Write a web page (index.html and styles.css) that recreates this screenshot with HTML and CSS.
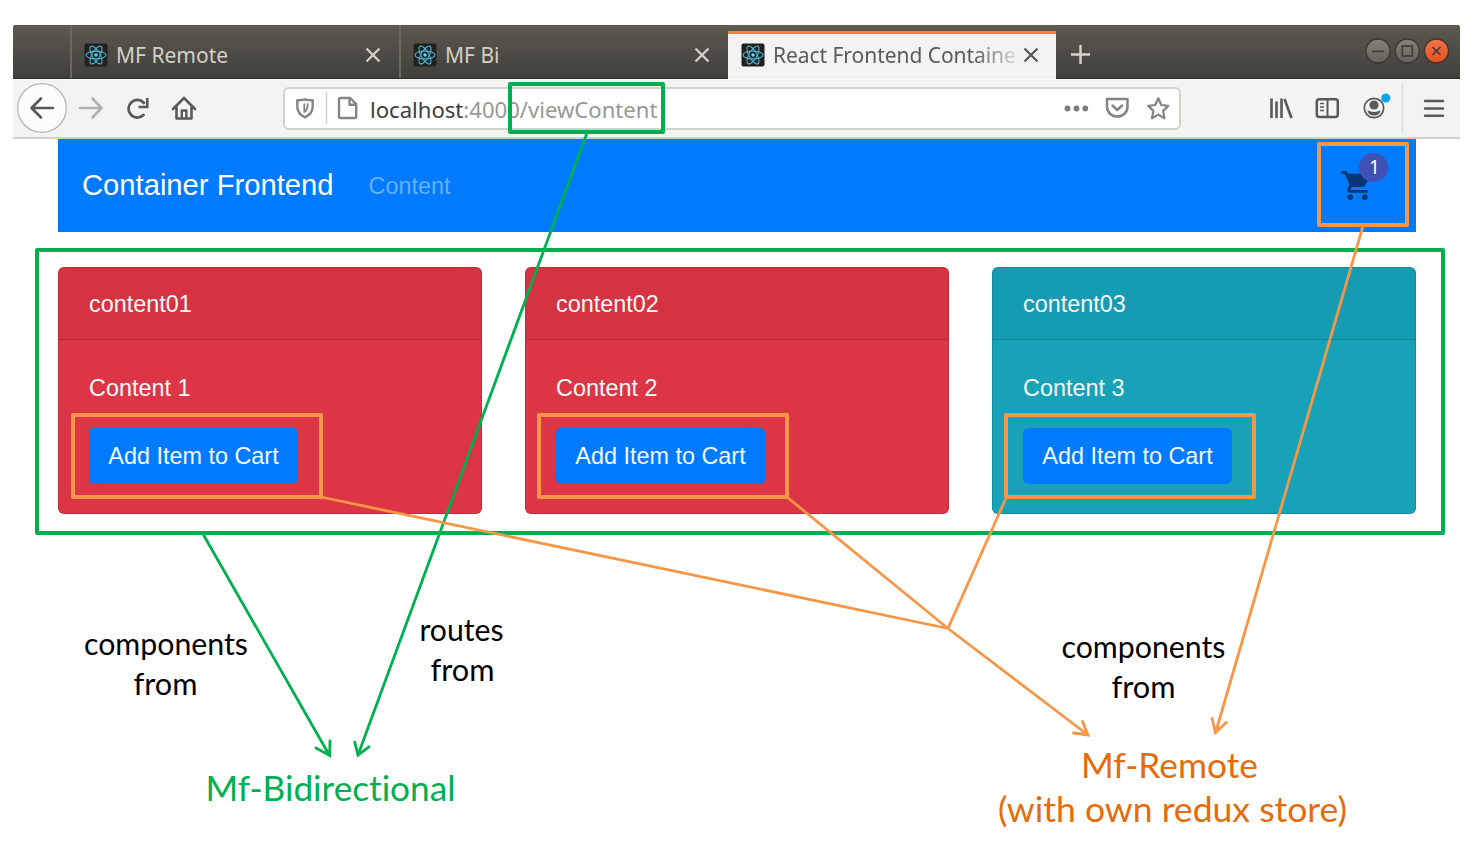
FILE: index.html
```html
<!DOCTYPE html>
<html lang="en">
<head>
<meta charset="utf-8">
<title>React Frontend Container</title>
<link rel="stylesheet" href="styles.css">
</head>
<body>
<svg class="defs" width="0" height="0">
  <symbol id="react" viewBox="0 0 24 24">
    <rect x=".5" y=".5" width="23" height="23" rx="2" fill="#20201f"/>
    <g fill="none" stroke="#4db4d0" stroke-width="1.100">
      <ellipse cx="12" cy="12" rx="10" ry="3.900"/>
      <ellipse cx="12" cy="12" rx="10" ry="3.900" transform="rotate(60 12 12)"/>
      <ellipse cx="12" cy="12" rx="10" ry="3.900" transform="rotate(120 12 12)"/>
    </g>
    <circle cx="12" cy="12" r="1.700" fill="#61dafb"/>
  </symbol>
  <symbol id="close" viewBox="0 0 16 16"><path d="M1.500 1.500l13 13M14.500 1.500l-13 13" fill="none" stroke="currentColor" stroke-width="2.300"/></symbol>
</svg>
<div class="browser">
  <div class="tabbar">
    <div class="tab-gap"></div>
    <div class="tab"><svg class="favicon"><use href="#react"/></svg><span class="tab-title">MF Remote</span><svg class="tab-close"><use href="#close"/></svg></div>
    <div class="tab"><svg class="favicon"><use href="#react"/></svg><span class="tab-title">MF Bi</span><svg class="tab-close"><use href="#close"/></svg></div>
    <div class="tab active"><svg class="favicon"><use href="#react"/></svg><span class="tab-title">React Frontend Containe</span><svg class="tab-close"><use href="#close"/></svg></div>
    <svg class="newtab" viewBox="0 0 22 22"><path d="M11 1v20M1 11h20" stroke="#d6d4cb" stroke-width="2.600"/></svg>
    <svg class="controls" width="88" height="30" viewBox="0 0 88 30">
      <defs><linearGradient id="gray" x2="0" y2="1"><stop offset="0" stop-color="#84827b"/><stop offset="1" stop-color="#64625b"/></linearGradient>
      <linearGradient id="red" x2="0" y2="1"><stop offset="0" stop-color="#f3734a"/><stop offset="1" stop-color="#e4501f"/></linearGradient></defs>
      <g stroke="#383732" stroke-width="1.300"><circle cx="15" cy="15" r="12" fill="url(#gray)"/><circle cx="44.300" cy="15" r="12" fill="url(#gray)"/><circle cx="73.500" cy="15" r="12" fill="url(#red)"/></g>
      <g fill="none" stroke="#3b3a35" stroke-width="1.600"><path d="M9 15.500h12"/><rect x="39.300" y="10" width="10" height="10"/><path d="M69.500 11l8 8M77.500 11l-8 8"/></g>
    </svg>
  </div>
  <div class="toolbar">
    <svg class="nav-icons" width="200" height="59" viewBox="13 79 200 59" fill="none" stroke-width="2.600" stroke-linecap="round" stroke-linejoin="round">
      <circle cx="42" cy="108" r="24.300" fill="#fcfcfc" stroke="#b9b7b4" stroke-width="1.300"/>
      <path d="M53 108H32M41 98.500l-9.500 9.500 9.500 9.500" stroke="#5a5958"/>
      <path d="M80 108h21M92.500 98.500l9 9.500-9 9.500" stroke="#b2b1b0"/>
      <path d="M143.500 115a8.800 8.800 0 1 1 .5-12" stroke="#5a5958" stroke-width="2.800"/><path d="M147.300 98v9h-8.800" stroke="#5a5958" stroke-linejoin="miter" stroke-linecap="butt"/>
      <g stroke="#5a5958"><path d="M173 109l11-11 11 11M176.500 107v11.500h15V107"/><path d="M181.800 118v-7.500h4.600v7.500" stroke-width="2.400"/></g>
    </svg>
    <div class="urlbar">
      <svg width="84" height="42" viewBox="285 88 84 42" fill="none" stroke="#858483" stroke-width="2.400" stroke-linejoin="round">
        <path d="M297.300 100.300c3 0 5-.3 7.700-1 2.700.7 4.700 1 7.700 1v6c0 5-3 9-7.700 11-4.700-2-7.700-6-7.700-11z"/><path d="M304.300 103.500v8.500c2.500-1.500 3.500-3.500 3.500-8.500" stroke-width="1.800"/>
        <path d="M326.500 92v32" stroke="#d0cfcd" stroke-width="1.500"/>
        <path d="M339 99.200q0-1.200 1.200-1.200h10l6 6.200v12.500q0 1.300-1.200 1.300h-14.800q-1.200 0-1.200-1.300zM349.500 98v6.800h6.700"/>
      </svg>
      <div class="address"><b>localhost</b>:4000/viewContent</div>
      <svg class="url-actions" width="120" height="42" viewBox="1060 88 120 42" fill="none" stroke="#858483" stroke-width="2.500" stroke-linejoin="round" stroke-linecap="round">
        <g fill="#7f7e7d" stroke="none"><circle cx="1068.500" cy="108.500" r="2.900"/><circle cx="1077.500" cy="108.500" r="2.900"/><circle cx="1086.300" cy="108.500" r="2.900"/></g>
        <path d="M1108 99h20.500v7.500c0 6-4.500 10-10.200 10s-10.300-4-10.300-10zM1113.500 105.500l4.800 4.500 4.800-4.500"/>
        <path d="M1159.300 98.300l3 6.700 7 .9-5.200 5 1.400 7.400-6.200-3.700-6.300 3.700 1.400-7.400-5.200-5 7-.9z" stroke-width="2.200"/>
      </svg>
    </div>
    <svg class="tool-icons" width="195" height="59" viewBox="1265 79 195 59" fill="none" stroke="#5a5958" stroke-width="2.600">
      <path d="M1271.500 98.500v19.500M1276.500 101.500v16.500M1281.500 98.500v19.500M1284.500 99l7 19"/>
      <rect x="1316.800" y="99.200" width="21" height="17.800" rx="2.500" stroke-width="2.500"/><path d="M1327.500 99v18" stroke-width="2"/><path d="M1320 103.500h4M1320 107h4M1320 110.500h4" stroke-width="1.300"/>
      <circle cx="1374" cy="108" r="9.700" stroke-width="1.700"/><g fill="#5a5958" stroke="none"><circle cx="1374" cy="105" r="4.600"/><path d="M1367.300 110.300q6.700 3.200 13.400 0-1.300 5.200-6.700 5.200t-6.700-5.200z"/></g>
      <circle cx="1385.800" cy="98" r="4.600" fill="#00a7f7" stroke="none"/>
      <path d="M1402.500 83v50" stroke="#dddcda" stroke-width="1.500"/>
      <path d="M1425 101h18M1425 108.500h18M1425 115.700h18" stroke-width="2.500" stroke-linecap="round"/>
    </svg>
  </div>
  <div class="page">
    <nav class="navbar">
      <span class="brand">Container Frontend</span><span class="link">Content</span>
      <div class="cart">
        <svg width="35" height="35" viewBox="0 0 24 24"><path fill="#073772" d="M7 18c-1.100 0-1.990.9-1.990 2S5.900 22 7 22s2-.9 2-2-.9-2-2-2zM1 2v2h2l3.600 7.590-1.350 2.450c-.16.280-.25.610-.25.960 0 1.100.9 2 2 2h12v-2H7.420c-.14 0-.25-.11-.25-.25l.03-.12.900-1.630h7.450c.75 0 1.410-.41 1.750-1.030l3.580-6.490c.08-.14.120-.31.120-.48 0-.55-.45-1-1-1H5.210l-.94-2H1zm16 16c-1.100 0-1.990.9-1.990 2s.89 2 1.990 2 2-.9 2-2-.9-2-2-2z"/></svg>
        <span class="badge">1</span>
      </div>
    </nav>
    <div class="cards">
      <section class="card danger"><header>content01</header><div class="body"><p>Content 1</p><button>Add Item to Cart</button></div></section>
      <section class="card danger"><header>content02</header><div class="body"><p>Content 2</p><button>Add Item to Cart</button></div></section>
      <section class="card info"><header>content03</header><div class="body"><p>Content 3</p><button>Add Item to Cart</button></div></section>
    </div>
  </div>
</div>
<svg class="annotations" width="1480" height="866" viewBox="0 0 1480 866">
  <g class="green">
    <rect x="510" y="84" width="153" height="48"/><rect x="37" y="250" width="1406" height="283"/>
    <path d="M203 534L329.500 755.500M587 133L358 755M316 748l13.700 7.500.3-14.500M354.700 742l3.300 13.200 11-8.400"/>
  </g>
  <g class="orange">
    <rect x="1319" y="144" width="88" height="81"/><rect x="73" y="415" width="248" height="82"/><rect x="539" y="415" width="248" height="82"/><rect x="1006" y="415" width="248" height="82"/>
    <path d="M321 497L948 628.500M787 497L948 628.500 1088 735M1006 498L948 628.500M1363 226L1215.500 733M1073.500 733l14.500 2-5.500-13.500M1212 718.500l3.500 14 10.700-10"/>
  </g>
  <g class="note">
    <text x="84" y="655" textLength="164" lengthAdjust="spacingAndGlyphs">components</text><text x="133.500" y="695" textLength="64" lengthAdjust="spacingAndGlyphs">from</text>
    <text x="419.500" y="641" textLength="84" lengthAdjust="spacingAndGlyphs">routes</text><text x="430.500" y="681" textLength="64" lengthAdjust="spacingAndGlyphs">from</text>
    <text x="1061.500" y="658" textLength="164" lengthAdjust="spacingAndGlyphs">components</text><text x="1111.500" y="698" textLength="64" lengthAdjust="spacingAndGlyphs">from</text>
  </g>
  <g class="target">
    <text class="bidi" x="205.500" y="800.500" textLength="250" lengthAdjust="spacingAndGlyphs">Mf-Bidirectional</text>
    <text x="1081" y="777.500" textLength="177" lengthAdjust="spacingAndGlyphs">Mf-Remote</text>
    <text x="998" y="822" textLength="349" lengthAdjust="spacingAndGlyphs">(with own redux store)</text>
  </g>
</svg>
</body>
</html>
```
FILE: styles.css
```css
* { box-sizing: border-box; }
body { margin: 0; width: 1480px; height: 866px; overflow: hidden; background: #fff; position: relative; font-family: "Liberation Sans", Arial, sans-serif; }
.defs { display: none; }
svg { display: block; flex: none; }
.browser { width: 1447px; margin: 0 0 0 13px; padding-top: 25px; }
.tabbar { height: 54px; display: flex; align-items: stretch; background: linear-gradient(#5b5951, #403f3a); border-bottom: 1px solid #2c2b27; border-radius: 2px 2px 0 0; }
.tab-gap { width: 57px; }
.tab { width: 329px; display: flex; align-items: center; padding: 7px 18px 0 12px; color: #d3d0c7; border-left: 2px solid #6b6960; font-family: "Noto Sans", sans-serif; font-size: 21px; }
.favicon { width: 24px; height: 24px; margin-right: 8px; }
.tab-title { flex: 1; white-space: nowrap; }
.tab-close { width: 16px; height: 16px; }
.tab.active { background: #f4f3f2; color: #5b5a58; margin: 6px 0 -1px; border-left: 0; border-top: 3px solid #f87e4c; padding: 0 17px 3px 13px; width: 328px; }
.active .tab-title { mask-image: linear-gradient(90deg, #000 200px, rgba(0,0,0,.2) 242px); letter-spacing: -.05px; }
.newtab { width: 21px; height: 21px; margin: 19px 0 0 14px; }
.controls { margin: 11px 9px 0 auto; }
.toolbar { height: 60px; display: flex; background: #f4f3f2; border-bottom: 2px solid #d2d0cd; border-top: 1px solid #fafafa; }
.toolbar > svg { margin-top: -1px; }
.urlbar { width: 898px; height: 43px; margin: 7px 0 0 70px; display: flex; align-items: center; background: #fff; border: 2px solid #d3d1cc; border-radius: 6px; }
.address { color: #999897; font: 22.100px "Noto Sans", sans-serif; margin-left: 1px; white-space: nowrap; }
.address b { color: #3d3d3d; font-weight: 400; }
.url-actions { margin-left: auto; }
.tool-icons { margin-left: auto; }
.page { padding: 0 44px 0 45px; }
.navbar { height: 93px; background: #007bff; display: flex; align-items: center; padding: 0 24px; color: #fff; }
.brand { font-size: 29.200px; }
.link { font-size: 23.400px; margin: 2px 0 0 35px; color: #66b0ff; }
.cart { margin-left: auto; margin-right: 17px; position: relative; }
.badge { position: absolute; left: 19px; top: -15px; width: 29px; height: 29px; border-radius: 50%; background: #3f51b5; font: 19px/29px "Noto Sans", sans-serif; text-align: center; padding-left: 2px; }
.cards { display: grid; grid-template-columns: repeat(3, 424px); justify-content: space-between; padding-top: 35px; }
.card { height: 247px; border: 1px solid rgba(0,0,0,.14); border-radius: 6px; color: #f8f9fa; font-size: 23.400px; }
.danger { background: #dc3545; }
.info { background: #17a2b8; }
.card header { height: 72px; padding: 0 30px; line-height: 73px; background: rgba(0,0,0,.03); border-bottom: 1px solid rgba(0,0,0,.16); }
.body { padding: 30px 30px; }
.body p { margin: 0 0 22px; line-height: 36px; }
button { display: block; width: 209px; height: 56px; padding: 1px 0 0; border: 0; border-radius: 5px; background: #007bff; color: #f5f8ff; font: 23.400px "Liberation Sans", Arial, sans-serif; }
.annotations { position: absolute; inset: 0; }
.annotations rect { fill: none; stroke-width: 4; stroke-linejoin: round; }
.annotations path { fill: none; stroke-width: 2.800; stroke-linecap: round; }
.green { stroke: #00b050; }
.orange { stroke: #f79646; }
.note, .target { font-family: Lato, sans-serif; font-variant-ligatures: none; }
.note { font-size: 30.500px; }
.target { font-size: 34.500px; fill: #e46c0a; }
.target .bidi { fill: #00b050; }
```
